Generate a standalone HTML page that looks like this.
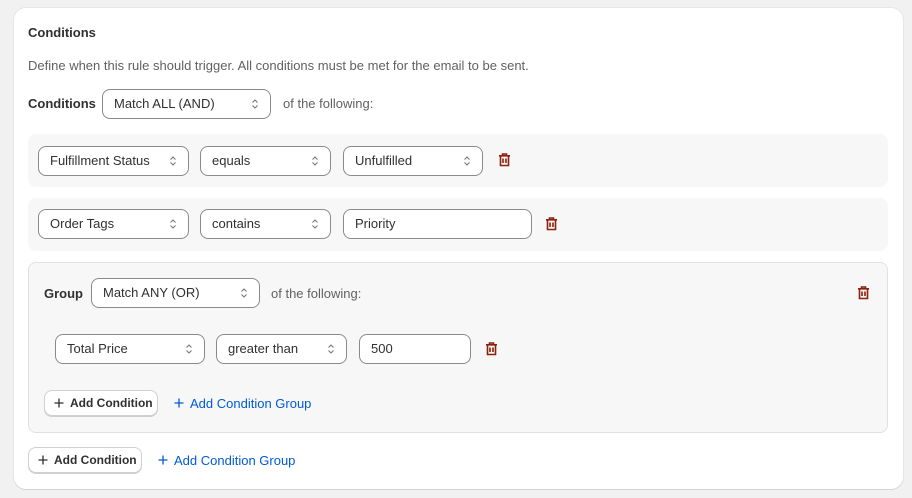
<!DOCTYPE html>
<html><head><style>
*{box-sizing:border-box;margin:0;padding:0}
body{width:912px;height:498px;background:#f1f1f1;font-family:"Liberation Sans",sans-serif;font-size:13px;color:#303030;position:relative;overflow:hidden}
.card{position:absolute;left:14px;top:8px;width:889px;height:481px;background:#fff;border-radius:12px;box-shadow:0 1px 0 #d4d4d4,0 0 0 1px #e6e6e6}
.a{position:absolute}
.sel{position:absolute;height:30px;border:1px solid #8a8a8a;border-radius:8px;background:#fff;padding:0 11px;line-height:28px;color:#303030}
.chev{position:absolute;right:10px;top:8px}
.box{position:absolute;left:28px;width:860px;background:#f7f7f7;border-radius:8px}
.btn{position:absolute;height:26px;border:1px solid #d0d0d0;border-radius:8px;background:#fff;box-shadow:0 1px 0 #cfcfcf;font-weight:bold;font-size:12px;line-height:24px;padding-left:25px;color:#303030}
.btn svg,.lnk svg{position:absolute}
.btn svg{left:9px;top:7px}
.lnk{position:absolute;color:#005bd3;font-size:13px;padding-left:16px}
.lnk svg{left:0;top:2px}
.muted{color:#616161}
</style></head><body>
<div class="card"></div>
<div class="a" style="left:28px;top:25px;font-weight:bold;font-size:13px">Conditions</div>
<div class="a muted" style="left:28px;top:58px">Define when this rule should trigger. All conditions must be met for the email to be sent.</div>
<div class="a" style="left:28px;top:96px;font-weight:bold">Conditions</div>
<div class="sel" style="left:102px;top:89px;width:169px">Match ALL (AND)<svg class="chev" width="10" height="12" viewBox="0 0 10 12"><path d="M2.5 4.5L5 2L7.5 4.5M2.5 7.5L5 10L7.5 7.5" fill="none" stroke="#777" stroke-width="1.1"/></svg></div>
<div class="a muted" style="left:283px;top:96px">of the following:</div>

<div class="box" style="top:134px;height:53px"></div>
<div class="sel" style="left:38px;top:146px;width:151px">Fulfillment Status<svg class="chev" width="10" height="12" viewBox="0 0 10 12"><path d="M2.5 4.5L5 2L7.5 4.5M2.5 7.5L5 10L7.5 7.5" fill="none" stroke="#777" stroke-width="1.1"/></svg></div>
<div class="sel" style="left:200px;top:146px;width:131px">equals<svg class="chev" width="10" height="12" viewBox="0 0 10 12"><path d="M2.5 4.5L5 2L7.5 4.5M2.5 7.5L5 10L7.5 7.5" fill="none" stroke="#777" stroke-width="1.1"/></svg></div>
<div class="sel" style="left:343px;top:146px;width:140px">Unfulfilled<svg class="chev" width="10" height="12" viewBox="0 0 10 12"><path d="M2.5 4.5L5 2L7.5 4.5M2.5 7.5L5 10L7.5 7.5" fill="none" stroke="#777" stroke-width="1.1"/></svg></div>
<svg class="a" style="left:498px;top:153px" width="13" height="14" viewBox="0 0 13 14"><path d="M4.5 2V1h4v1M1 2.8h11M2.5 3v9.5h8V3M5 5.5v4.5M8 5.5v4.5" fill="none" stroke="#8e1f0b" stroke-width="1.6"/></svg>

<div class="box" style="top:198px;height:53px"></div>
<div class="sel" style="left:38px;top:209px;width:151px">Order Tags<svg class="chev" width="10" height="12" viewBox="0 0 10 12"><path d="M2.5 4.5L5 2L7.5 4.5M2.5 7.5L5 10L7.5 7.5" fill="none" stroke="#777" stroke-width="1.1"/></svg></div>
<div class="sel" style="left:200px;top:209px;width:131px">contains<svg class="chev" width="10" height="12" viewBox="0 0 10 12"><path d="M2.5 4.5L5 2L7.5 4.5M2.5 7.5L5 10L7.5 7.5" fill="none" stroke="#777" stroke-width="1.1"/></svg></div>
<div class="sel" style="left:343px;top:209px;width:189px">Priority</div>
<svg class="a" style="left:545px;top:217px" width="13" height="14" viewBox="0 0 13 14"><path d="M4.5 2V1h4v1M1 2.8h11M2.5 3v9.5h8V3M5 5.5v4.5M8 5.5v4.5" fill="none" stroke="#8e1f0b" stroke-width="1.6"/></svg>

<div class="box" style="top:262px;height:171px;border:1px solid #e1e1e1"></div>
<div class="a" style="left:44px;top:286px;font-weight:bold">Group</div>
<div class="sel" style="left:91px;top:278px;width:169px">Match ANY (OR)<svg class="chev" width="10" height="12" viewBox="0 0 10 12"><path d="M2.5 4.5L5 2L7.5 4.5M2.5 7.5L5 10L7.5 7.5" fill="none" stroke="#777" stroke-width="1.1"/></svg></div>
<div class="a muted" style="left:271px;top:286px">of the following:</div>
<svg class="a" style="left:857px;top:286px" width="13" height="14" viewBox="0 0 13 14"><path d="M4.5 2V1h4v1M1 2.8h11M2.5 3v9.5h8V3M5 5.5v4.5M8 5.5v4.5" fill="none" stroke="#8e1f0b" stroke-width="1.6"/></svg>

<div class="sel" style="left:55px;top:334px;width:150px">Total Price<svg class="chev" width="10" height="12" viewBox="0 0 10 12"><path d="M2.5 4.5L5 2L7.5 4.5M2.5 7.5L5 10L7.5 7.5" fill="none" stroke="#777" stroke-width="1.1"/></svg></div>
<div class="sel" style="left:216px;top:334px;width:131px">greater than<svg class="chev" width="10" height="12" viewBox="0 0 10 12"><path d="M2.5 4.5L5 2L7.5 4.5M2.5 7.5L5 10L7.5 7.5" fill="none" stroke="#777" stroke-width="1.1"/></svg></div>
<div class="sel" style="left:359px;top:334px;width:112px">500</div>
<svg class="a" style="left:485px;top:342px" width="13" height="14" viewBox="0 0 13 14"><path d="M4.5 2V1h4v1M1 2.8h11M2.5 3v9.5h8V3M5 5.5v4.5M8 5.5v4.5" fill="none" stroke="#8e1f0b" stroke-width="1.6"/></svg>

<div class="btn" style="left:44px;top:390px;width:114px"><svg width="10" height="10" viewBox="0 0 10 10"><path d="M5 0.5v9M0.5 5h9" stroke="#303030" stroke-width="1.3"/></svg>Add Condition</div>
<div class="lnk" style="left:174px;top:396px"><svg width="10" height="10" viewBox="0 0 10 10"><path d="M5 0.5v9M0.5 5h9" stroke="#005bd3" stroke-width="1.3"/></svg>Add Condition Group</div>

<div class="btn" style="left:28px;top:447px;width:114px"><svg width="10" height="10" viewBox="0 0 10 10"><path d="M5 0.5v9M0.5 5h9" stroke="#303030" stroke-width="1.3"/></svg>Add Condition</div>
<div class="lnk" style="left:158px;top:453px"><svg width="10" height="10" viewBox="0 0 10 10"><path d="M5 0.5v9M0.5 5h9" stroke="#005bd3" stroke-width="1.3"/></svg>Add Condition Group</div>
</body></html>
